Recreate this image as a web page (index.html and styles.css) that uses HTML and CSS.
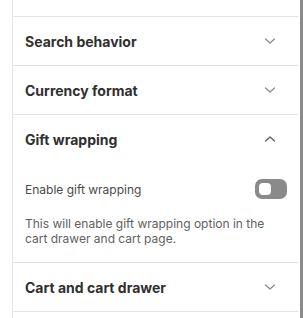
FILE: index.html
```html
<!DOCTYPE html>
<html lang="en">
<head>
<meta charset="utf-8">
<link rel="stylesheet" href="styles.css">
</head>
<body>
<div class="page">
  <div class="panel">
    <div class="spacer-top"></div>
    <div class="item">
      <div class="item-head">
        <span class="item-title">Search behavior</span>
        <svg class="chev" width="12" height="8" viewBox="0 0 12 8"><path d="M1.5 2 L6 6 L10.5 2" fill="none" stroke="#8a8a8a" stroke-width="1.3" stroke-linecap="round" stroke-linejoin="round"/></svg>
      </div>
    </div>
    <div class="item">
      <div class="item-head">
        <span class="item-title">Currency format</span>
        <svg class="chev" width="12" height="8" viewBox="0 0 12 8"><path d="M1.5 2 L6 6 L10.5 2" fill="none" stroke="#8a8a8a" stroke-width="1.3" stroke-linecap="round" stroke-linejoin="round"/></svg>
      </div>
    </div>
    <div class="item">
      <div class="item-head">
        <span class="item-title">Gift wrapping</span>
        <svg class="chev" width="12" height="8" viewBox="0 0 12 8"><path d="M1.5 6 L6 2 L10.5 6" fill="none" stroke="#616161" stroke-width="1.4" stroke-linecap="round" stroke-linejoin="round"/></svg>
      </div>
      <div class="item-body">
        <div class="setting-row">
          <span class="setting-label">Enable gift wrapping</span>
          <span class="toggle"><span class="knob"></span></span>
        </div>
        <p class="help">This will enable gift wrapping option in the cart drawer and cart page.</p>
      </div>
    </div>
    <div class="item">
      <div class="item-head">
        <span class="item-title">Cart and cart drawer</span>
        <svg class="chev" width="12" height="8" viewBox="0 0 12 8"><path d="M1.5 2 L6 6 L10.5 2" fill="none" stroke="#8a8a8a" stroke-width="1.3" stroke-linecap="round" stroke-linejoin="round"/></svg>
      </div>
    </div>
    <div class="item last"></div>
  </div>
  <div class="scrollbar"></div>
</div>
</body>
</html>
```
FILE: styles.css
```css
* { box-sizing: border-box; }
html, body {
  margin: 0;
  padding: 0;
  background: #ffffff;
  overflow: hidden;
}
body {
  font-family: Inter, "Noto Sans", "Liberation Sans", sans-serif;
  color: #303030;
}
.page {
  display: flex;
  height: 318px;
  padding-left: 12px;
}
.panel {
  width: 286px;
  border-left: 1px solid #e3e3e3;
  display: flex;
  flex-direction: column;
}
.spacer-top {
  height: 16px;
}
.item {
  border-top: 1px solid #e3e3e3;
}
.item.last {
  flex: 1;
}
.item-head {
  height: 48px;
  display: flex;
  align-items: center;
  justify-content: space-between;
  padding: 0 22px 0 12px;
}
.item-title {
  font-size: 14px;
  font-weight: 650;
  color: #303030;
}
.chev {
  display: block;
}
.item-body {
  padding: 16px 11px 16px 12px;
}
.setting-row {
  display: flex;
  align-items: center;
  justify-content: space-between;
  height: 20px;
}
.setting-label {
  font-size: 12px;
  color: #4a4a4a;
}
.toggle {
  width: 32px;
  height: 20px;
  background: #8a8a8a;
  border-radius: 7px;
  padding: 4px;
  display: flex;
  align-items: center;
}
.knob {
  width: 12px;
  height: 12px;
  background: #ffffff;
  border-radius: 4px;
}
.help {
  margin: 17px 0 0;
  font-size: 12px;
  line-height: 15px;
  color: #616161;
}
.scrollbar {
  margin-left: 2px;
  width: 3px;
  background: #8a8a8a;
}
```
